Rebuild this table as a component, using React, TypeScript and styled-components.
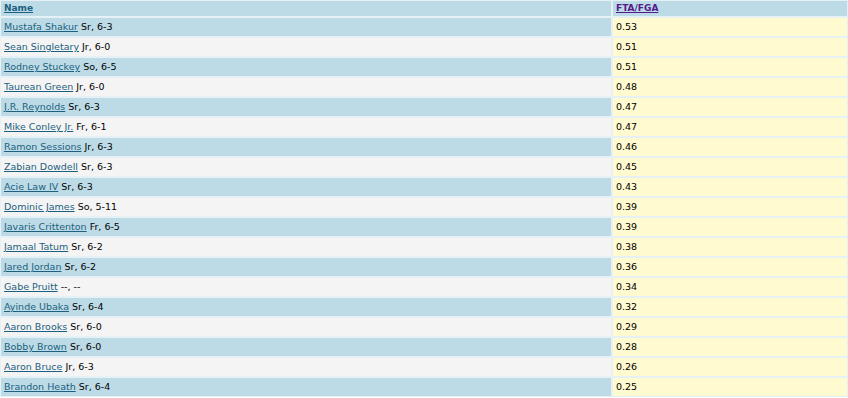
import React from "react";
import styled, { createGlobalStyle } from "styled-components";

const GlobalStyle = createGlobalStyle`
  html, body { margin: 0; padding: 0; background: #ffffff; }
  body { font-family: "DejaVu Sans", Verdana, sans-serif; }
`;

type Player = { name: string; info: string; value: string };

const players: Player[] = [
  { name: "Mustafa Shakur", info: "Sr, 6-3", value: "0.53" },
  { name: "Sean Singletary", info: "Jr, 6-0", value: "0.51" },
  { name: "Rodney Stuckey", info: "So, 6-5", value: "0.51" },
  { name: "Taurean Green", info: "Jr, 6-0", value: "0.48" },
  { name: "J.R. Reynolds", info: "Sr, 6-3", value: "0.47" },
  { name: "Mike Conley Jr.", info: "Fr, 6-1", value: "0.47" },
  { name: "Ramon Sessions", info: "Jr, 6-3", value: "0.46" },
  { name: "Zabian Dowdell", info: "Sr, 6-3", value: "0.45" },
  { name: "Acie Law IV", info: "Sr, 6-3", value: "0.43" },
  { name: "Dominic James", info: "So, 5-11", value: "0.39" },
  { name: "Javaris Crittenton", info: "Fr, 6-5", value: "0.39" },
  { name: "Jamaal Tatum", info: "Sr, 6-2", value: "0.38" },
  { name: "Jared Jordan", info: "Sr, 6-2", value: "0.36" },
  { name: "Gabe Pruitt", info: "--, --", value: "0.34" },
  { name: "Ayinde Ubaka", info: "Sr, 6-4", value: "0.32" },
  { name: "Aaron Brooks", info: "Sr, 6-0", value: "0.29" },
  { name: "Bobby Brown", info: "Sr, 6-0", value: "0.28" },
  { name: "Aaron Bruce", info: "Jr, 6-3", value: "0.26" },
  { name: "Brandon Heath", info: "Sr, 6-4", value: "0.25" },
];

const StatsTable = styled.div`
  display: grid;
  grid-template-columns: 610px 234px;
  grid-auto-rows: 18px;
  grid-template-rows: 15px;
  gap: 2px;
  padding: 1px;
  width: 848px;
  box-sizing: border-box;
  background: #e6f1f5;
  font-family: "DejaVu Sans", Verdana, sans-serif;
  font-size: 9.5px;
  color: #000000;
`;

type Tone = "blue" | "gray" | "yellow";

const toneColor: Record<Tone, string> = {
  blue: "#bcdbe6",
  gray: "#f4f4f4",
  yellow: "#fffad0",
};

const Cell = styled.div<{ $tone: Tone }>`
  display: flex;
  align-items: center;
  padding: 0 3px 1px;
  background: ${(p) => toneColor[p.$tone]};
  white-space: nowrap;
  overflow: hidden;
`;

const HeaderLink = styled.a<{ $visited?: boolean }>`
  font-weight: bold;
  font-size: 9px;
  color: ${(p) => (p.$visited ? "#551a8b" : "#1c5f7f")};
  text-decoration: underline;
  cursor: pointer;
`;

const PlayerLink = styled.a`
  color: #1c5f7f;
  text-decoration: underline;
  cursor: pointer;
`;

export default function App() {
  return (
    <>
      <GlobalStyle />
      <StatsTable>
        <Cell $tone="blue">
          <HeaderLink href="#">Name</HeaderLink>
        </Cell>
        <Cell $tone="blue">
          <HeaderLink href="#" $visited>
            FTA/FGA
          </HeaderLink>
        </Cell>
        {players.map((p, i) => (
          <React.Fragment key={p.name}>
            <Cell $tone={i % 2 === 0 ? "blue" : "gray"}>
              <PlayerLink href="#">{p.name}</PlayerLink>
              &nbsp;{p.info}
            </Cell>
            <Cell $tone="yellow">{p.value}</Cell>
          </React.Fragment>
        ))}
      </StatsTable>
    </>
  );
}
